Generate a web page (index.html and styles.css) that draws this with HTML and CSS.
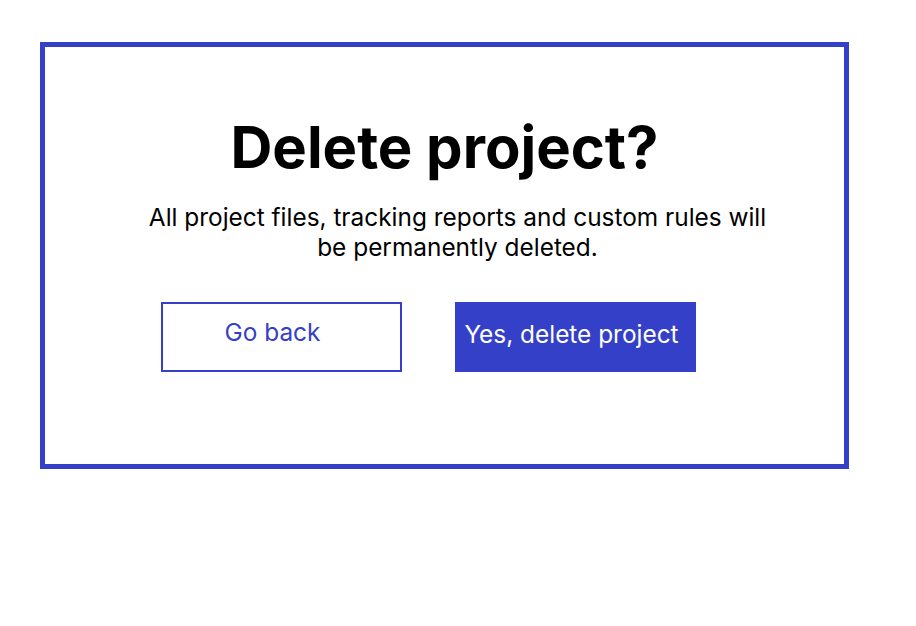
FILE: index.html
```html
<!DOCTYPE html>
<html>
<head>
<meta charset="utf-8">
<link rel="stylesheet" href="styles.css">
</head>
<body>
<div class="dialog">
  <h1 class="title">Delete project?</h1>
  <p class="desc">All project files, tracking reports and custom rules will<br>be permanently deleted.</p>
  <div class="actions">
    <button class="btn btn-outline">Go back</button>
    <button class="btn btn-solid">Yes, delete project</button>
  </div>
</div>
</body>
</html>
```

FILE: styles.css
```css
html, body {
  margin: 0;
  padding: 0;
  background: #ffffff;
}
body {
  font-family: Inter, "Noto Sans", sans-serif;
  padding: 42px 0 0 40px;
}
.dialog {
  box-sizing: border-box;
  width: 809px;
  height: 427px;
  border: 5px solid #3540c8;
  display: flex;
  flex-direction: column;
  align-items: center;
  padding-top: 67px;
}
.title {
  margin: 0;
  font-size: 58px;
  font-weight: 700;
  line-height: 66px;
  color: #000;
}
.desc {
  margin: 22px 0 0 26px;
  font-size: 24.4px;
  line-height: 30px;
  text-align: center;
  color: #000;
}
.actions {
  display: flex;
  gap: 53px;
  margin-top: 40px;
  align-self: flex-start;
  margin-left: 116px;
}
.btn {
  box-sizing: border-box;
  width: 241px;
  height: 70px;
  font-family: Inter, "Noto Sans", sans-serif;
  font-size: 24.4px;
  border-radius: 0;
  cursor: pointer;
}
.btn-outline {
  background: #fff;
  color: #3540c8;
  border: 2px solid #3540c8;
  padding: 0 18px 10px 0;
}
.btn-solid {
  background: #3540c8;
  color: #fff;
  border: none;
  padding: 0 8px 6px 0;
}
```
